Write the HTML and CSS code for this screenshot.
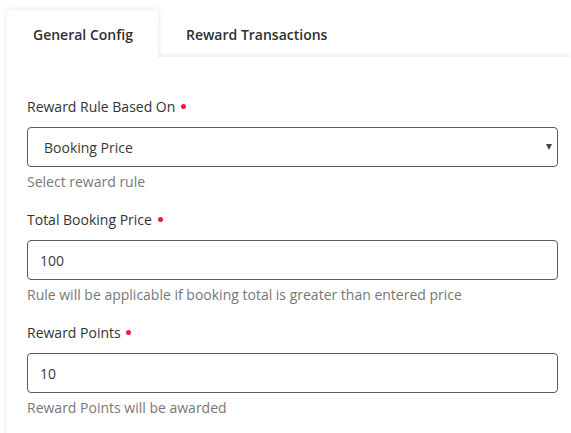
FILE: index.html
```html
<!DOCTYPE html>
<html lang="en">
<head>
<meta charset="utf-8">
<title>Reward Config</title>
<link rel="stylesheet" href="styles.css">
</head>
<body>
<div class="wrap">
  <ul class="tabs">
    <li class="tab active">General Config</li>
    <li class="tab">Reward Transactions</li>
  </ul>
  <div class="panel">
    <div class="group">
      <label class="label">Reward Rule Based On <span class="req"></span></label>
      <div class="select-wrap">
        <select class="control select">
          <option>Booking Price</option>
        </select>
      </div>
      <div class="help">Select reward rule</div>
    </div>
    <div class="group">
      <label class="label">Total Booking Price <span class="req"></span></label>
      <input class="control input" type="text" value="100">
      <div class="help">Rule will be applicable if booking total is greater than entered price</div>
    </div>
    <div class="group">
      <label class="label">Reward Points <span class="req"></span></label>
      <input class="control input" type="text" value="10">
      <div class="help">Reward Points will be awarded</div>
    </div>
  </div>
</div>
</body>
</html>
```

FILE: styles.css
```css
html, body {
  margin: 0;
  padding: 0;
  background: #fff;
  overflow: hidden;
}
body {
  font-family: "Open Sans", "Liberation Sans", sans-serif;
  font-size: 14px;
  color: #333;
}
.wrap {
  padding: 10px 0 0 7px;
}
.tabs {
  list-style: none;
  margin: 0;
  padding: 0;
  display: flex;
  gap: 2px;
  position: relative;
  z-index: 2;
}
.tab {
  padding: 15px 25px 12px 26px;
  line-height: 20px;
  font-weight: 600;
  color: #2f2f2f;
  background: transparent;
  border-radius: 4px 4px 0 0;
}
.tab.active {
  background: #fff;
  box-shadow: 0 0 7px rgba(0, 0, 0, 0.11);
  clip-path: inset(-12px -12px 0 -12px);
}
.panel {
  position: relative;
  z-index: 1;
  background: #fff;
  box-shadow: 0 0 7px rgba(0, 0, 0, 0.11);
  padding: 40px 13px 20px 20px;
}
.group {
  margin-bottom: 18px;
}
.label {
  display: block;
  line-height: 20px;
  margin-bottom: 10px;
  color: #333;
}
.req {
  display: inline-block;
  width: 5px;
  height: 5px;
  border-radius: 50%;
  background: #ea1c3f;
  vertical-align: middle;
  margin-left: 2px;
  position: relative;
  top: -2px;
}
.control {
  display: block;
  width: 100%;
  box-sizing: border-box;
  height: 40px;
  border: 1px solid #5a5a5a;
  border-radius: 4px;
  background: #fff;
  font-family: "Open Sans", "Liberation Sans", sans-serif;
  font-size: 14px;
  color: #3a3a3a;
  outline: none;
  margin: 0;
}
.input {
  padding: 0 12px;
}
.select-wrap {
  position: relative;
}
.select {
  appearance: none;
  -webkit-appearance: none;
  padding: 0 30px 0 16px;
}
.select-wrap::after {
  content: "";
  position: absolute;
  right: 6px;
  top: 17px;
  width: 0;
  height: 0;
  border-left: 3px solid transparent;
  border-right: 3px solid transparent;
  border-top: 6px solid #444;
  pointer-events: none;
}
.help {
  margin-top: 5px;
  line-height: 20px;
  color: #777;
}
```
